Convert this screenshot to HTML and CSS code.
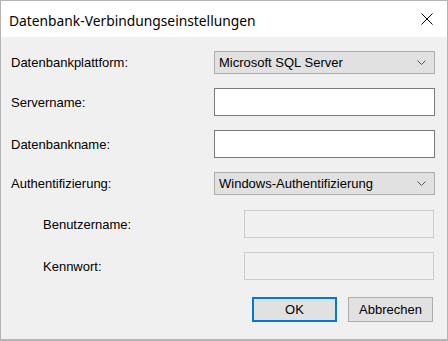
FILE: index.html
```html
<!DOCTYPE html>
<html lang="de">
<head>
<meta charset="utf-8">
<title>Datenbank-Verbindungseinstellungen</title>
<link rel="stylesheet" href="styles.css">
</head>
<body>
<div class="dialog">
  <div class="titlebar">
    <span class="title">Datenbank-Verbindungseinstellungen</span>
    <svg class="close" width="12" height="12" viewBox="0 0 12 12"><path d="M0.5 0.5 L11.5 11.5 M11.5 0.5 L0.5 11.5" stroke="#000" stroke-width="1" fill="none"/></svg>
  </div>
  <div class="content">
    <div class="form">
      <div class="row r-combo">
        <label class="lbl">Datenbankplattform:</label>
        <div class="combo"><span>Microsoft SQL Server</span><svg class="chev" width="9" height="5" viewBox="0 0 9 5"><path d="M0.5 0.5 L4.5 4.5 L8.5 0.5" stroke="#555" fill="none"/></svg></div>
      </div>
      <div class="row r-text">
        <label class="lbl">Servername:</label>
        <div class="textbox"></div>
      </div>
      <div class="row r-text">
        <label class="lbl">Datenbankname:</label>
        <div class="textbox"></div>
      </div>
      <div class="row r-combo">
        <label class="lbl">Authentifizierung:</label>
        <div class="combo"><span>Windows-Authentifizierung</span><svg class="chev" width="9" height="5" viewBox="0 0 9 5"><path d="M0.5 0.5 L4.5 4.5 L8.5 0.5" stroke="#555" fill="none"/></svg></div>
      </div>
      <div class="row r-text sub first-sub">
        <label class="lbl">Benutzername:</label>
        <div class="textbox disabled"></div>
      </div>
      <div class="row r-text sub">
        <label class="lbl">Kennwort:</label>
        <div class="textbox disabled"></div>
      </div>
    </div>
    <div class="buttons">
      <button class="btn default">OK</button>
      <button class="btn">Abbrechen</button>
    </div>
  </div>
</div>
</body>
</html>
```
FILE: styles.css
```css
html, body {
  margin: 0;
  padding: 0;
  width: 448px;
  height: 341px;
  overflow: hidden;
  background: #f0f0f0;
}
.dialog {
  box-sizing: border-box;
  width: 448px;
  height: 341px;
  border: 1px solid #b4b4b4;
  border-bottom-width: 2px;
  background: #f0f0f0;
  display: flex;
  flex-direction: column;
  font-family: "Liberation Sans", Arial, sans-serif;
  font-size: 13px;
  color: #000;
}
.titlebar {
  height: 36px;
  background: #fff;
  display: flex;
  align-items: center;
  justify-content: space-between;
  padding: 0 14px 0 8px;
}
.title {
  font-family: "Noto Sans", "Open Sans", sans-serif;
  font-size: 13.8px;
  color: #000;
  position: relative;
  top: 1px;
}
.close {
  display: block;
}
.content {
  padding: 14px 12px 0 10px;
  display: flex;
  flex-direction: column;
}
.form {
  display: flex;
  flex-direction: column;
  gap: 14px;
}
.row {
  display: flex;
  align-items: center;
}
.lbl {
  width: 203px;
  flex: none;
}
.row.sub .lbl {
  padding-left: 32px;
  width: 233px;
  box-sizing: border-box;
}
.row.first-sub {
  margin-top: 1px;
}
.combo {
  flex: 1;
  height: 23px;
  box-sizing: border-box;
  border: 1px solid #adadad;
  background: #e1e1e1;
  display: flex;
  align-items: center;
  justify-content: space-between;
  padding: 0 8px 0 4px;
}
.textbox {
  flex: 1;
  height: 28px;
  box-sizing: border-box;
  border: 1px solid #7a7a7a;
  background: #fff;
}
.textbox.disabled {
  border-color: #cccccc;
  background: #f0f0f0;
  margin-right: 1px;
}
.buttons {
  display: flex;
  justify-content: flex-end;
  gap: 11px;
  margin-top: 17px;
  padding-right: 2px;
}
.btn {
  width: 85px;
  height: 25px;
  box-sizing: border-box;
  border: 1px solid #adadad;
  background: #e1e1e1;
  font-family: "Liberation Sans", Arial, sans-serif;
  font-size: 13px;
  color: #000;
  padding: 0;
  margin: 0;
}
.btn.default {
  border: 2px solid #0078d7;
}
```
